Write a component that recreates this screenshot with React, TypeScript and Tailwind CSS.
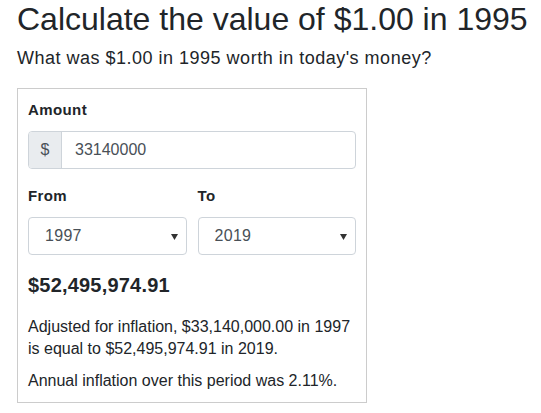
export default function App() {
    return (
        <div className="min-h-screen bg-white px-[17px] text-[#212529]" style={{ fontFamily: '"Liberation Sans", Arial, sans-serif' }}>
            <h1 className="text-[32px] leading-[38px] font-normal whitespace-nowrap">Calculate the value of $1.00 in 1995</h1>
            <p className="text-[18px] leading-[24px] mt-[8px] tracking-[0.5px] whitespace-nowrap">What was $1.00 in 1995 worth in today's money?</p>

            <div className="mt-[18px] w-[350px] border border-[#cccccc] px-[10px] pt-[10px] pb-[10px]">
                <label className="block text-[15px] font-bold leading-[22px] mb-[10px] tracking-[0.4px]">Amount</label>
                <div className="flex h-[38px] border border-[#ced4da] rounded-[4px] overflow-hidden">
                    <span className="flex items-center justify-center w-[33px] bg-[#e9ecef] border-r border-[#ced4da] text-[16px] text-[#495057]">$</span>
                    <input
                        className="flex-1 px-[13px] text-[16px] text-[#495057] outline-none"
                        defaultValue="33140000"
                    />
                </div>

                <div className="grid grid-cols-2 gap-[11px] mt-[16px]">
                    <div>
                        <label className="block text-[15px] font-bold leading-[22px] mb-[10px] tracking-[0.4px]">From</label>
                        <SelectBox value="1997" />
                    </div>
                    <div>
                        <label className="block text-[15px] font-bold leading-[22px] mb-[10px] tracking-[0.4px]">To</label>
                        <SelectBox value="2019" />
                    </div>
                </div>

                <div className="text-[20px] font-bold leading-[28px] mt-[16px] tracking-[0.2px]">$52,495,974.91</div>
                <p className="text-[16px] leading-[22px] mt-[17px]">
                    Adjusted for inflation, $33,140,000.00 in 1997 is equal to $52,495,974.91 in 2019.
                </p>
                <p className="text-[16px] leading-[22px] mt-[10px]">Annual inflation over this period was 2.11%.</p>
            </div>
        </div>
    );
}

function SelectBox({ value }: { value: string }) {
    return (
        <div className="relative flex items-center h-[38px] border border-[#ced4da] rounded-[4px] pl-[16px] text-[16px] text-[#495057] tracking-[0.3px]">
            {value}
            <svg className="absolute right-[8px] top-[16px] w-[7px] h-[6px]" viewBox="0 0 7 6">
                <path d="M0 0h7L3.5 6z" fill="#333" />
            </svg>
        </div>
    );
}
